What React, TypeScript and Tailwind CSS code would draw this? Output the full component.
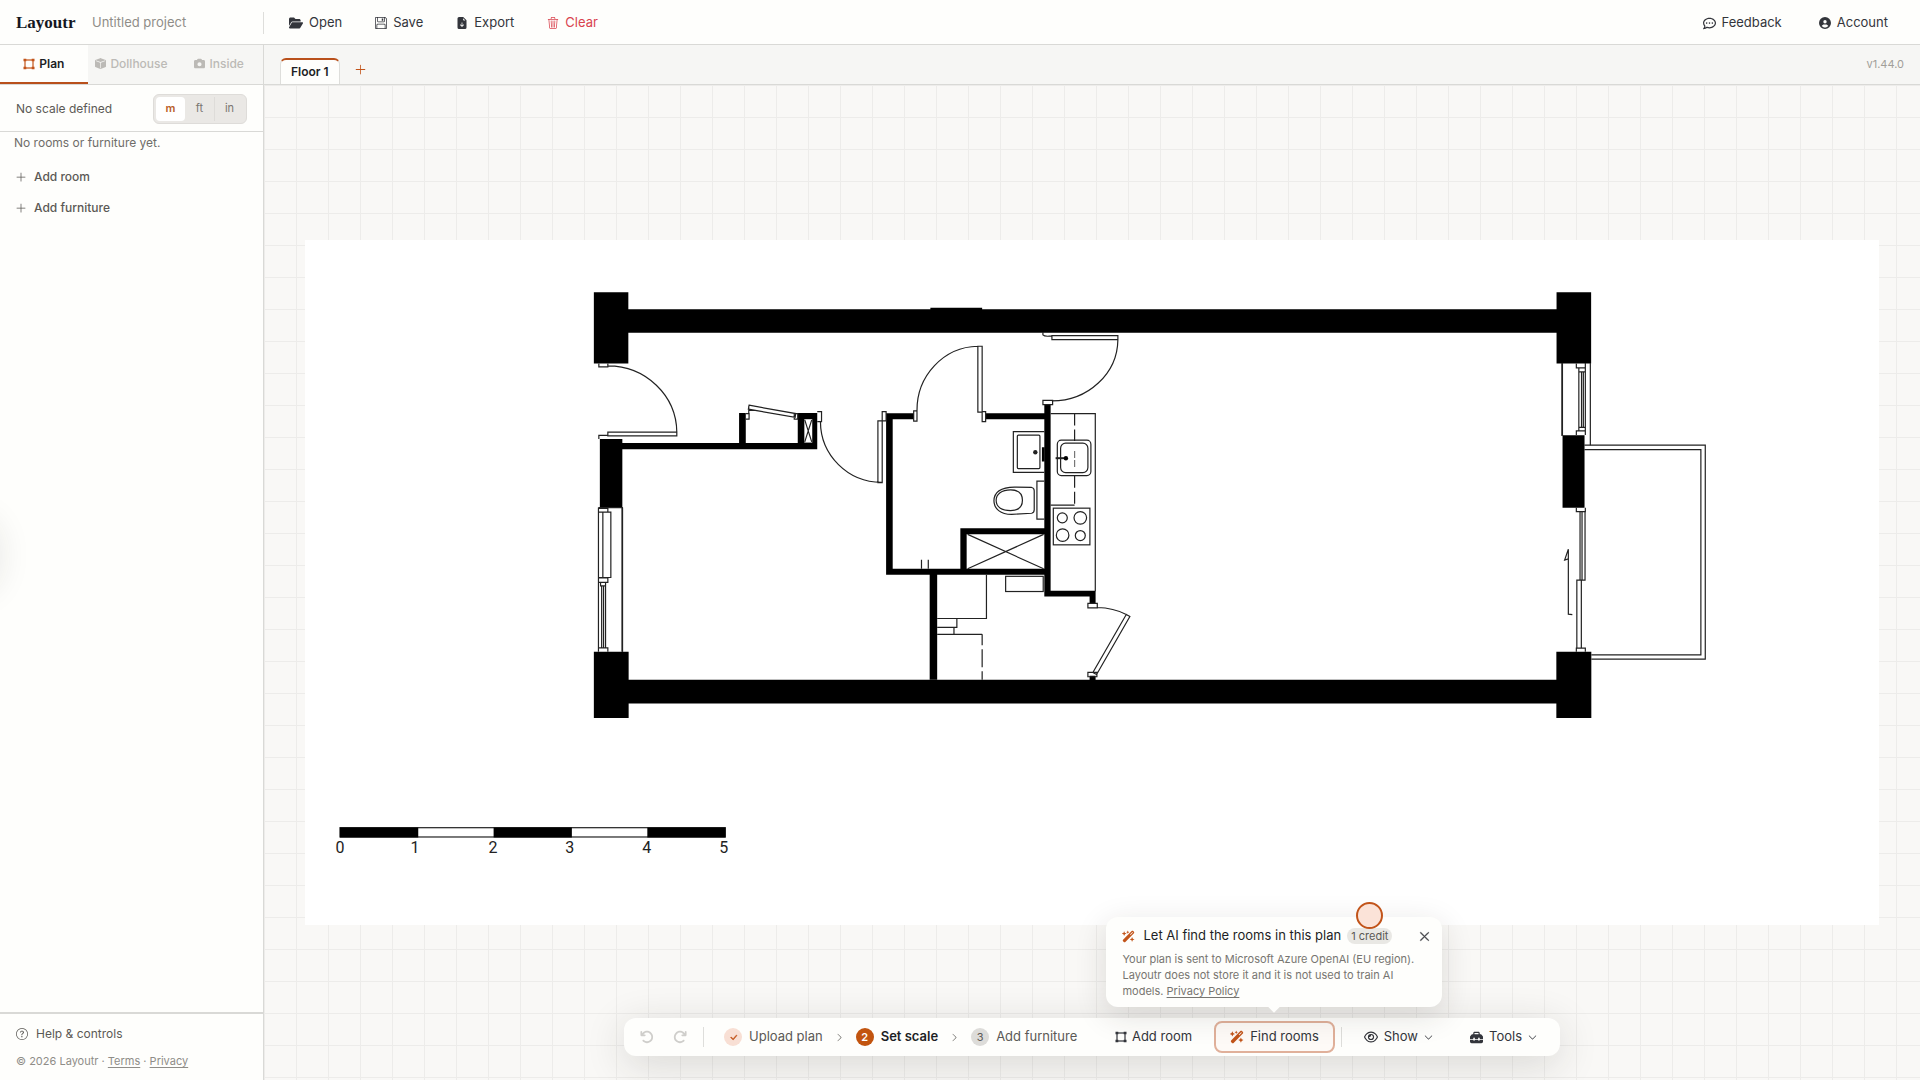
import React from 'react';
import {
  BsBoxFill,
  BsCheckLg,
  BsChevronDown,
  BsChevronRight,
  BsFileEarmarkArrowDownFill,
  BsFloppy,
  BsPlusLg,
  BsQuestionCircle,
  BsTrash3,
  BsXLg,
} from 'react-icons/bs';
import {
  FaArrowRotateLeft,
  FaArrowRotateRight,
  FaCamera,
  FaCircleUser,
  FaFolderOpen,
  FaRegCommentDots,
  FaRegEye,
  FaToolbox,
  FaWandMagicSparkles,
} from 'react-icons/fa6';

const RoomIcon = ({ className }: { className?: string }) => (
  <svg width="12" height="12" viewBox="0 0 12 12" className={className} aria-hidden="true">
    <rect x="2" y="2" width="8" height="8" fill="none" stroke="currentColor" strokeWidth="1.2" />
    <path d="M.5 .7H3.3V3.3H.5ZM8.7 .7H11.5V3.3H8.7ZM.5 8.7H3.3V11.3H.5ZM8.7 8.7H11.5V11.3H8.7Z" fill="currentColor" />
  </svg>
);

const HeaderButton = ({ icon, label, danger }: { icon: React.ReactNode; label: string; danger?: boolean }) => (
  <button
    type="button"
    className={`flex items-center gap-1.5 px-4 h-8 text-[13px] ${danger ? 'text-[#d9434e]' : 'text-[#33353b]'}`}
  >
    {icon}
    {label}
  </button>
);

const Header = () => (
  <header className="flex items-center h-[45px] pt-0.5 bg-[#fefefc] border-b border-[#d9d9d6]">
    <div className="flex items-center w-[264px] h-[22px] pl-4 border-r border-[#dededb]">
      <h1 className="font-['Liberation_Serif',serif] text-[17px] leading-5 font-bold text-[#15171f] w-[76px]">
        Layoutr
      </h1>
      <input
        aria-label="Project name"
        defaultValue="Untitled project"
        className="w-36 bg-transparent text-[13px] text-[#8f8d88] outline-none"
      />
    </div>
    <nav className="flex items-center gap-px pl-[9px]">
      <HeaderButton icon={<FaFolderOpen size={14} />} label="Open" />
      <HeaderButton icon={<BsFloppy size={12} />} label="Save" />
      <HeaderButton icon={<BsFileEarmarkArrowDownFill size={12} />} label="Export" />
      <HeaderButton icon={<BsTrash3 size={12} />} label="Clear" danger />
    </nav>
    <div className="flex items-center gap-[5px] ml-auto pr-4">
      <HeaderButton icon={<FaRegCommentDots size={13} />} label="Feedback" />
      <HeaderButton icon={<FaCircleUser size={12} />} label="Account" />
    </div>
  </header>
);

const viewTabs = [
  { label: 'Plan', icon: <RoomIcon className="text-[#c2541a]" />, active: true },
  { label: 'Dollhouse', icon: <BsBoxFill size={11} />, active: false },
  { label: 'Inside', icon: <FaCamera size={11} />, active: false },
];

const units = ['m', 'ft', 'in'];

const Sidebar = () => (
  <aside className="relative flex flex-col w-[264px] shrink-0 bg-[#fefefc] border-r border-[#d9d9d6] overflow-hidden">
    <div className="flex h-10 border-b border-[#d9d9d6]">
      {viewTabs.map((tab) => (
        <button
          key={tab.label}
          type="button"
          disabled={!tab.active}
          className={`flex flex-1 items-center justify-center gap-1 border-b-2 text-xs ${
            tab.active
              ? 'border-[#b9501b] font-semibold text-[#1d1f25]'
              : 'border-transparent bg-[#f6f6f4] font-medium text-[#bcbab6]'
          }`}
        >
          {tab.icon}
          {tab.label}
        </button>
      ))}
    </div>

    <div className="flex items-center justify-between h-[47px] pt-px px-4 border-b border-[#d9d9d6]">
      <span className="text-xs text-[#5b5955]">No scale defined</span>
      <div className="flex items-center p-0.5 h-[30px] w-[94px] rounded-md bg-[#eae8e5] border border-[#dedcd9]">
        {units.map((unit, index) => (
          <button
            key={unit}
            type="button"
            aria-pressed={index === 0}
            className={`flex-1 h-6 text-[11px] ${
              index === 0 ? 'rounded bg-white font-semibold text-[#b9602a]' : 'text-[#7a7772]'
            } ${index === 2 ? 'border-l border-[#dedcd9]' : ''}`}
          >
            {unit}
          </button>
        ))}
      </div>
    </div>

    <p className="px-3.5 pt-px text-xs leading-5 text-[#6f6d69]">No rooms or furniture yet.</p>
    <div className="flex flex-col pt-2">
      <button type="button" className="flex items-center gap-[7px] h-[31px] px-[15px] text-xs font-medium text-[#5b5955]">
        <BsPlusLg size={12} />
        Add room
      </button>
      <button type="button" className="flex items-center gap-[7px] h-[31px] px-[15px] text-xs font-medium text-[#5b5955]">
        <BsPlusLg size={12} />
        Add furniture
      </button>
    </div>

    <div className="absolute -left-16 top-[462px] h-20 w-16 rounded-full shadow-[0_8px_32px_rgba(40,38,30,0.1)]" />

    <footer className="mt-auto h-[68px] px-4 pt-2 border-t-2 border-[#d9d9d6]">
      <button type="button" className="flex items-center gap-2 h-6 text-xs text-[#5b5955]">
        <BsQuestionCircle size={12} />
        Help &amp; controls
      </button>
      <p className="pt-[7px] text-[11px] leading-4 text-[#8f8d88]">
        © 2026 Layoutr ·{' '}
        <a href="#terms" className="underline underline-offset-2">Terms</a> ·{' '}
        <a href="#privacy" className="underline underline-offset-2">Privacy</a>
      </p>
    </footer>
  </aside>
);

const FloorPlan = () => (
  <svg viewBox="305 240 1574 685" className="block w-[95%] h-auto bg-white" role="img" aria-label="Floor plan">
    {/* Solid walls */}
    <g fill="#000">
      <path d="M594 292.3H628.5V309.3H930.7V307.7H982.5V309.3H1557.2V292.3H1591.8V363.5H1557.2V332.7H628.5V363.5H594Z" />
      <path d="M594 652H628.8V680H1557V652H1592V718.3H1557V703.7H628.8V718.3H594Z" />
      <path d="M600 439H622.5V443H739.3V413H746V443H798V413H817.5V449.3H622.5V507.7H600Z" />
      <path d="M886.4 413.3H914.3V419.3H893V569H960.7V528.3H1044.7V419.3H986V413.3H1044.7V404.3H1051V591H1096V604H1090V596.7H1044.7V575H937.5V680H930V575H886.4Z" />
      <path d="M1090 676H1096V681H1090ZM1563.2 435.3H1585.2V508H1563.2ZM1042.3 447.3H1045V461.7H1042.3Z" />
    </g>
    <g fill="#fff">
      <path d="M967 534.3H1044.7V569H967Z" />
      <path d="M804.6 419.3H812.5V442.7H804.6Z" />
    </g>

    <g fill="none" stroke="#222" strokeWidth="1.2">
      {/* Shafts */}
      <path d="M968 534.5L1044 569M968 569L1044 534.5M805 420L812 442M812 420L805 442" />

      {/* Hinged doors */}
      <path d="M599 363.5V367H608V363.5M608 366A69 67 0 0 1 677 432.3M608 432.3H677V436H608ZM599 439V435.5H608" />
      <path d="M749.3 405.3L796 413.7L795.4 417.5L748.6 409.3ZM746 413.7H749.3V419.3H746M749 406V414M794.5 413.7H798V419.3H794.5Z" />
      <path d="M817.5 411.7H821.8V421.7H817.5M820.7 421.7A61 61 0 0 0 882 482.5M878.2 421H882.5V482.7H878.2ZM882.5 421V411.7H886.4V421H878.2" />
      <path d="M914 411H917.3V421.3H914ZM917.3 411A62 64 0 0 1 978.2 346.3M978.2 346.3H982.5V412.3H978.2ZM982.5 411.7H986V421.7H982.5Z" />
      <path d="M1052.3 335.7H1118.3V339.7H1052.3ZM1043.3 332V335Q1045 337 1052.3 336M1118.3 339.7A66 62 0 0 1 1052.3 401M1043.3 400.5H1053V404.7H1043.3Z" />
      <path d="M1088.3 603.5H1097.7V608H1088.3ZM1097.7 607.7Q1114 608 1126.7 614.7M1126.7 614.7L1130.3 616.7L1097 674.7L1093.3 672.7ZM1088.3 672.7H1097.3V677H1088.3Z" />

      {/* Left window */}
      <path d="M598.6 507.7H622.5V652M598.6 507.7V652M599 508.5H608V512.3M598.6 512.3H611V577.7H598.6M603 512.3V577.7M599 578H608V582.5H599M600.7 582.5V586H605.7V582.5M601.8 586V648M603.7 586V648M605.7 586V648M599 648H608V652" />
      <path d="M622.5 507.7V652" strokeWidth="1.6" />

      {/* Right window, balcony and sliding door */}
      <path d="M1562.8 363V436" strokeWidth="1.8" />
      <path d="M1591 363V445.3M1586 363V435M1577 363.5V368H1586M1579.5 368V372H1585.5M1579.5 372V427M1582.2 372V427M1584 372V427M1579.5 431V427.5H1586M1577 435V431H1586" />
      <path d="M1585 445.3H1706V659.3H1592M1585 449.7H1701.6V655H1592" />
      <path d="M1577 508V511.7H1586V508M1580.7 511.7V580.3M1582.7 511.7V580.3M1585.7 511.7V580.3H1577.5V648.3M1582 580.3V648.3M1577 652V648.3H1586V652" />
      <path d="M1573 614.8L1569 614.3V549.3L1565.3 560.3L1569 559" />

      {/* Bathroom */}
      <path d="M1044.7 431.7H1013.7V472.5H1044.7" />
      <rect x="1017.7" y="435.3" width="22.6" height="33.4" rx="1" />
      <path d="M1044.7 481.3H1037.3V519.3H1044.7" />
      <path d="M1032 487.6L1015 487.2C1001 487.5 994.3 492 994.3 501C994.3 509 1001 514.5 1012 514.5L1032 513.4Q1034.6 513 1034.6 510V491Q1034.6 488 1032 487.6Z" />
      <path d="M1011 490C1019 490 1022.8 494 1022.8 500.5C1022.8 507 1019 510.7 1011 510.7C1002 510.7 996.5 507 996.5 500.5C996.5 494 1002 490 1011 490Z" />
      <path d="M921.8 560V569M928.6 560V569" />

      {/* Kitchen */}
      <path d="M1051 413.7H1095.7V591.5M1051 505.3H1075" />
      <path d="M1075 413.7V441M1075 476V505.3" strokeDasharray="12 4" />
      <path d="M1075 451V467" strokeDasharray="7 2" stroke="#777" />
      <rect x="1057.7" y="440.3" width="33.6" height="35.4" rx="4" />
      <rect x="1061" y="443.3" width="27.3" height="29.4" rx="5" />
      <path d="M1056 458.3H1066" strokeWidth="2" />
      <rect x="1053.7" y="508.3" width="36.6" height="36.7" />
      <circle cx="1062.7" cy="518" r="5" />
      <circle cx="1080.7" cy="518" r="6.3" />
      <circle cx="1063" cy="535.3" r="6.3" />
      <circle cx="1080.7" cy="535.7" r="5" />

      {/* Storage */}
      <path d="M986.8 575V618.7H937.5M957.2 618.7V627.5H937.5M954.3 627.5V634.5M937.5 634.5H982.5" />
      <path d="M982.5 634.5V680" strokeDasharray="11 4 18 4" />
      <rect x="1006" y="576.5" width="37.6" height="15.2" />
    </g>
    <circle cx="1035.7" cy="452.3" r="2.2" fill="#222" />
    <circle cx="1066.3" cy="458.3" r="2.2" fill="#000" />

    {/* Scale bar */}
    <rect x="340" y="828" width="385.5" height="9.3" fill="#fff" stroke="#222" strokeWidth="1.2" />
    <path d="M340 827.7H418.3V837.7H340ZM493.7 827.7H572V837.7H493.7ZM647.5 827.7H725.7V837.7H647.5Z" />
    <g fontFamily="Roboto, sans-serif" fontSize="16" textAnchor="middle" fill="#222">
      <text x="340" y="853">0</text>
      <text x="415" y="853">1</text>
      <text x="493" y="853">2</text>
      <text x="570" y="853">3</text>
      <text x="647" y="853">4</text>
      <text x="724" y="853">5</text>
    </g>
  </svg>
);

const AiPopover = () => (
  <div
    role="dialog"
    aria-label="Find rooms with AI"
    className="absolute bottom-full left-1/2 mb-3.5 h-[90px] w-[336px] -translate-x-1/2 rounded-xl bg-[#fefefc] pl-4 pr-3 pt-2 text-left whitespace-normal shadow-[0_8px_32px_rgba(40,38,30,0.14)]"
  >
    <div className="flex items-center h-[22px]">
      <FaWandMagicSparkles size={13} className="mr-2 text-[#c2541a]" />
      <h2 className="text-[13px] text-[#1d1f25] whitespace-nowrap">Let AI find the rooms in this plan</h2>
      <span className="ml-1.5 rounded-full bg-[#e9e8e4] px-1 text-[11px] leading-4 text-[#5b5955] whitespace-nowrap">
        1 credit
      </span>
      <button type="button" aria-label="Dismiss" className="ml-auto text-[#3c3d42]">
        <BsXLg size={11} strokeWidth={1} />
      </button>
    </div>
    <div className="pt-1 text-[11px] leading-4 text-[#777570]">
      <p>Your plan is sent to Microsoft Azure OpenAI (EU region).</p>
      <p>Layoutr does not store it and it is not used to train AI</p>
      <p>
        models. <a href="#privacy-policy" className="underline underline-offset-2">Privacy Policy</a>
      </p>
    </div>
    <div className="absolute -bottom-1 left-1/2 size-2 -translate-x-1/2 rotate-45 bg-[#fefefc]" />
    <div className="absolute -top-[15px] left-[250px] size-[27px] rounded-full border-2 border-[#c2541a] bg-[#fbe3d8]" />
  </div>
);

const Divider = () => <div className="h-5 w-px bg-[#dededb]" />;

const Toolbar = () => (
  <div className="absolute bottom-6 left-1/2 flex h-[38px] w-[936px] -translate-x-1/2 items-center rounded-xl bg-[#fefefc] px-4 text-[13px] text-[#33353b] whitespace-nowrap shadow-[0_8px_40px_rgba(40,38,30,0.16)]">
    <button type="button" aria-label="Undo" className="text-[#cfcecb]"><FaArrowRotateLeft size={14} /></button>
    <button type="button" aria-label="Redo" className="ml-[19px] text-[#cfcecb]"><FaArrowRotateRight size={14} /></button>
    <div className="ml-4 mr-5"><Divider /></div>

    <ol className="flex items-center gap-3 text-[#5b5955]">
      <li className="flex items-center gap-[7px]">
        <span className="flex size-[18px] items-center justify-center rounded-full bg-[#f8dfd4] text-[#c2541a]">
          <BsCheckLg size={9} strokeWidth={1} />
        </span>
        Upload plan
      </li>
      <li aria-hidden="true"><BsChevronRight size={9} /></li>
      <li className="flex items-center gap-[7px] font-semibold text-[#1d1f25]">
        <span className="flex size-[18px] items-center justify-center rounded-full bg-[#c2540f] text-[11px] text-white">2</span>
        Set scale
      </li>
      <li aria-hidden="true"><BsChevronRight size={9} /></li>
      <li className="flex items-center gap-[7px]">
        <span className="flex size-[18px] items-center justify-center rounded-full bg-[#dddcd9] text-[11px]">3</span>
        Add furniture
      </li>
    </ol>

    <div className="ml-auto flex items-center">
      <button type="button" className="flex items-center gap-[5px] px-[22px]">
        <RoomIcon />
        Add room
      </button>
      <div className="relative">
        <button
          type="button"
          className="flex h-8 items-center gap-1.5 rounded-lg border-2 border-[#e0b09a] bg-[#fefaf7] px-3.5"
        >
          <FaWandMagicSparkles size={14} className="text-[#c2541a]" />
          Find rooms
        </button>
        <AiPopover />
      </div>
      <div className="ml-1.5 mr-[22px]"><Divider /></div>
      <button type="button" className="flex items-center gap-1.5">
        <FaRegEye size={14} />
        Show
        <BsChevronDown size={9} />
      </button>
      <button type="button" className="ml-[37px] mr-[7px] flex items-center gap-1.5">
        <FaToolbox size={13} />
        Tools
        <BsChevronDown size={9} />
      </button>
    </div>
  </div>
);

const Workspace = () => (
  <main className="flex min-w-0 flex-1 flex-col">
    <div className="flex h-10 items-end border-b border-[#d9d9d6] bg-[#f6f6f4] px-4">
      <button
        type="button"
        className="h-[26px] rounded-t-md border-x border-t-2 border-x-[#dededb] border-t-[#b9501b] bg-[#fefefc] px-2.5 text-xs font-semibold text-[#1d1f25]"
      >
        Floor 1
      </button>
      <button type="button" aria-label="Add floor" className="ml-3.5 pb-2 text-[#c2541a]">
        <BsPlusLg size={13} />
      </button>
      <span className="ml-auto self-center text-[11px] text-[#a19e99]">v1.44.0</span>
    </div>
    <div className="relative flex flex-1 items-center justify-center bg-[#f9f8f6] bg-[linear-gradient(to_right,#edecea_1px,transparent_1px),linear-gradient(to_bottom,#edecea_1px,transparent_1px)] bg-[size:32px_32px]">
      <FloorPlan />
      <Toolbar />
    </div>
  </main>
);

const App = () => (
  <div className="flex h-screen flex-col font-['Inter',sans-serif] text-[#33353b]">
    <Header />
    <div className="flex min-h-0 flex-1">
      <Sidebar />
      <Workspace />
    </div>
  </div>
);

export default App;
